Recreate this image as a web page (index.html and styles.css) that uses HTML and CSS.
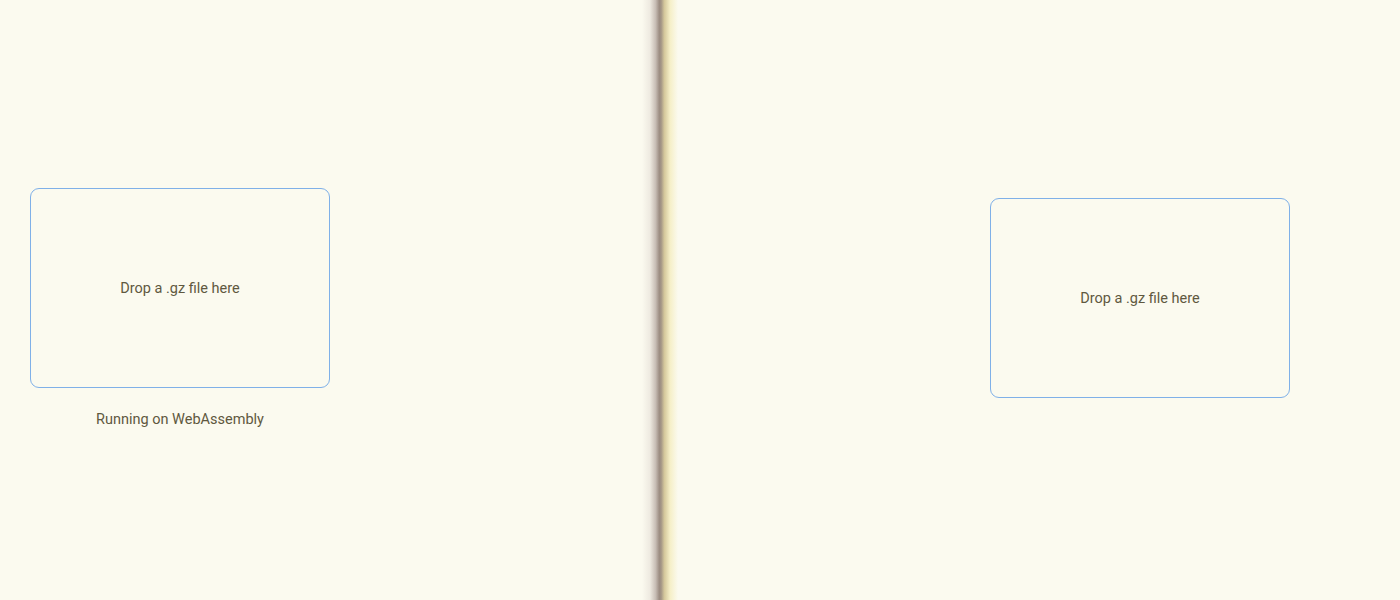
FILE: index.html
```html
<!DOCTYPE html>
<html>
<head>
<meta charset="utf-8">
<link rel="stylesheet" href="styles.css">
</head>
<body>
<div class="page">
  <div class="pane pane-left">
    <div class="dropzone"><span>Drop a .gz file here</span></div>
    <div class="status">Running on WebAssembly</div>
  </div>
  <div class="divider"></div>
  <div class="pane pane-right">
    <div class="dropzone"><span>Drop a .gz file here</span></div>
  </div>
</div>
</body>
</html>
```
FILE: styles.css
```css
html, body {
  margin: 0;
  padding: 0;
  width: 1400px;
  height: 600px;
  overflow: hidden;
  background: #fbfaef;
  font-family: Roboto, "Noto Sans", sans-serif;
}
.page {
  display: flex;
  width: 1400px;
  height: 600px;
}
.pane {
  box-sizing: border-box;
  height: 600px;
}
.pane-left {
  width: 642px;
  padding: 188px 0 0 30px;
}
.pane-right {
  flex: 1;
  padding: 198px 0 0 312px;
}
.divider {
  width: 36px;
  height: 600px;
  background: linear-gradient(to right,
    rgba(251,250,239,0) 0%,
    rgba(225,218,210,0.5) 22%,
    rgba(190,178,170,0.85) 38%,
    #9c8d82 48%,
    #a39585 53%,
    rgba(205,190,140,0.85) 62%,
    rgba(240,228,160,0.5) 78%,
    rgba(251,250,239,0) 100%);
}
.dropzone {
  box-sizing: border-box;
  width: 300px;
  height: 200px;
  border: 1px solid #7fb0e8;
  border-radius: 9px;
  display: flex;
  align-items: center;
  justify-content: center;
  font-size: 14.5px;
  color: #5f5840;
}
.status {
  width: 300px;
  margin-top: 22px;
  text-align: center;
  font-size: 14.5px;
  line-height: 20px;
  color: #5f5840;
}
```
